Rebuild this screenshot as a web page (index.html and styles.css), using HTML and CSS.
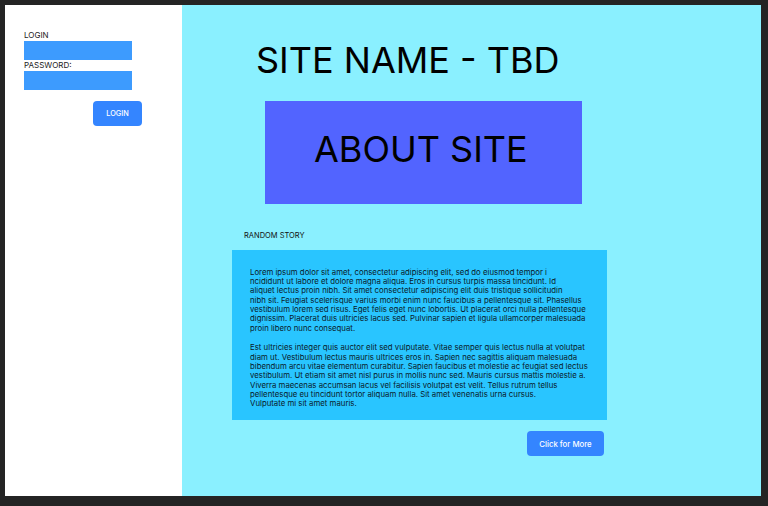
FILE: index.html
```html
<!DOCTYPE html>
<html lang="en">
<head>
<meta charset="utf-8">
<title>Site Name - TBD</title>
<link rel="stylesheet" href="styles.css">
</head>
<body>
<div class="frame">
  <aside class="side">
    <label class="field-label">LOGIN</label>
    <div class="input"></div>
    <label class="field-label">PASSWORD:</label>
    <div class="input"></div>
    <button class="btn login-btn">LOGIN</button>
  </aside>
  <main class="main">
    <h1 class="title">SITE NAME - TBD</h1>
    <div class="about">ABOUT SITE</div>
    <div class="story-label">RANDOM STORY</div>
    <div class="story">
      <p>Lorem ipsum dolor sit amet, consectetur adipiscing elit, sed do eiusmod tempor i<br>ncididunt ut labore et dolore magna aliqua. Eros in cursus turpis massa tincidunt. Id<br>aliquet lectus proin nibh. Sit amet consectetur adipiscing elit duis tristique sollicitudin<br>nibh sit. Feugiat scelerisque varius morbi enim nunc faucibus a pellentesque sit. Phasellus<br>vestibulum lorem sed risus. Eget felis eget nunc lobortis. Ut placerat orci nulla pellentesque<br>dignissim. Placerat duis ultricies lacus sed. Pulvinar sapien et ligula ullamcorper malesuada<br>proin libero nunc consequat.</p>
      <p class="p2">Est ultricies integer quis auctor elit sed vulputate. Vitae semper quis lectus nulla at volutpat<br>diam ut. Vestibulum lectus mauris ultrices eros in. Sapien nec sagittis aliquam malesuada<br>bibendum arcu vitae elementum curabitur. Sapien faucibus et molestie ac feugiat sed lectus<br>vestibulum. Ut etiam sit amet nisl purus in mollis nunc sed. Mauris cursus mattis molestie a.<br>Viverra maecenas accumsan lacus vel facilisis volutpat est velit. Tellus rutrum tellus<br>pellentesque eu tincidunt tortor aliquam nulla. Sit amet venenatis urna cursus.<br>Vulputate mi sit amet mauris.</p>
    </div>
    <button class="btn more-btn">Click for More</button>
  </main>
</div>
</body>
</html>
```

FILE: styles.css
```css
* { box-sizing: border-box; }
html, body { margin: 0; padding: 0; }
body {
  background: #242424;
  padding: 5px 7px 10px 5px;
  font-family: Inter, "Liberation Sans", sans-serif;
  color: #111;
}
.frame {
  display: flex;
  width: 756px;
  height: 491px;
}
.side {
  width: 177px;
  flex: none;
  background: #ffffff;
  padding: 25px 0 0 19px;
  display: flex;
  flex-direction: column;
  align-items: flex-start;
}
.field-label {
  display: block;
  font-size: 8px;
  line-height: 11px;
  color: #222;
}
.input {
  width: 108px;
  height: 19px;
  background: #3d9bfe;
}
.btn {
  border: none;
  background: #3485ff;
  color: #fff;
  font-family: Inter, "Liberation Sans", sans-serif;
  border-radius: 4px;
  padding: 0;
  cursor: pointer;
}
.login-btn {
  margin: 11px 0 0 69px;
  width: 49px;
  height: 25px;
  font-size: 7.3px;
  font-weight: 500;
}
.main {
  flex: 1;
  background: #8af0ff;
  display: flex;
  flex-direction: column;
  align-items: flex-start;
  padding-top: 33px;
}
.title {
  margin: 0 0 0 74px;
  font-size: 36px;
  line-height: 44px;
  font-weight: 400;
  color: #000;
  white-space: nowrap;
}
.about {
  margin: 19px 0 0 83px;
  width: 317px;
  height: 103px;
  background: #5264ff;
  font-size: 36px;
  line-height: 44px;
  color: #000;
  padding: 26px 0 0 49px;
  white-space: nowrap;
}
.story-label {
  margin: 28px 0 0 62px;
  font-size: 7.5px;
  line-height: 8px;
  color: #111;
}
.story {
  margin: 10px 0 0 50px;
  width: 375px;
  height: 170px;
  background: #29c5ff;
  padding: 17.5px 0 0 18px;
  font-size: 7.8px;
  line-height: 9.35px;
  color: #0a1a2a;
  white-space: nowrap;
}
.story p { margin: 0; }
.story .p2 { margin-top: 10.3px; }
.more-btn {
  margin: 11px 0 0 345px;
  width: 77px;
  height: 25px;
  font-size: 7.8px;
  font-weight: 500;
}
```
